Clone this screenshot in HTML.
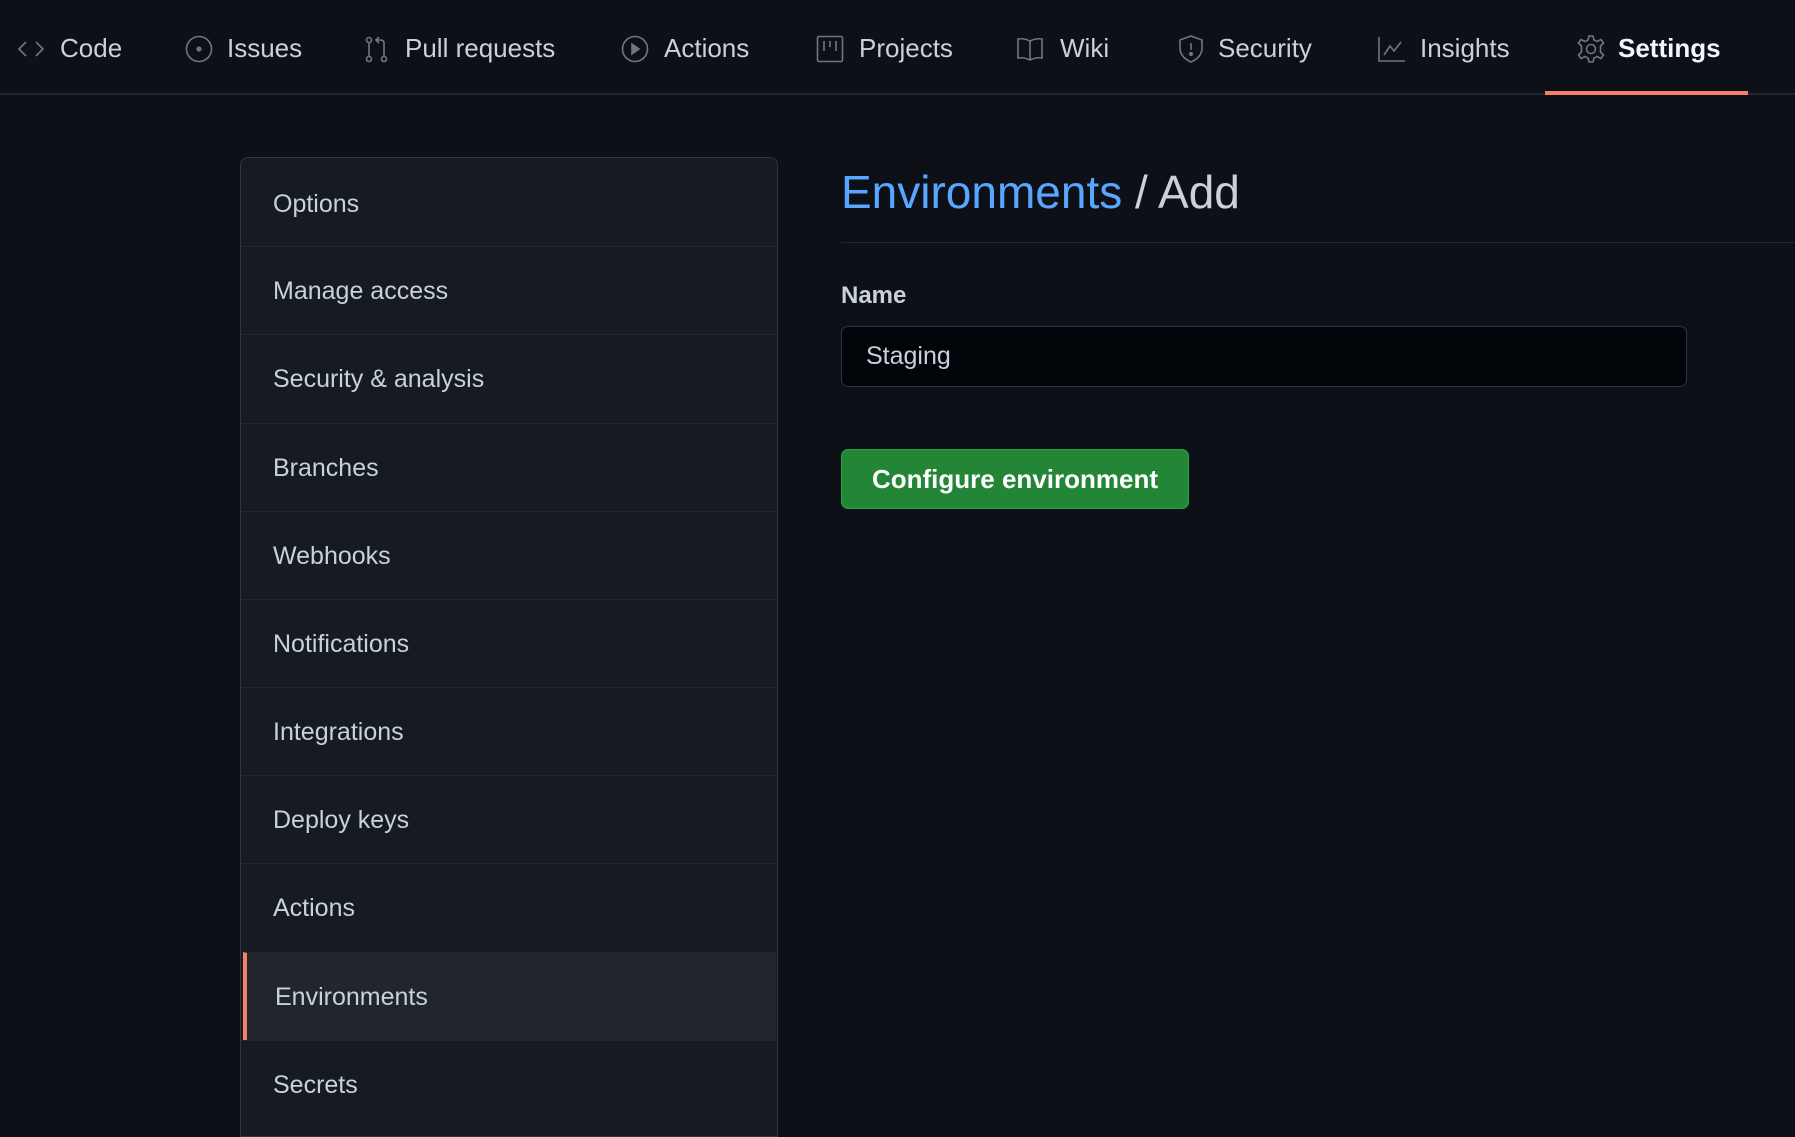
<!DOCTYPE html>
<html><head><meta charset="utf-8"><style>
*{box-sizing:border-box;margin:0;padding:0}
body{width:1795px;height:1116px;background:#0d1117;color:#c9d1d9;font-family:"Liberation Sans",sans-serif;overflow:hidden;position:relative}
.nav{position:absolute;left:0;top:0;width:1795px;height:95px;border-bottom:2px solid #21262d}
.ni{position:absolute;top:30px;height:36px;font-size:26px;line-height:36px;color:#c9d1d9;white-space:nowrap}
.ni svg{position:absolute;top:4px;width:30px;height:30px;fill:none;stroke:#6e7681;stroke-width:1.6}
.ul{position:absolute;left:1545px;top:91px;width:203px;height:4px;background:#f78166}
.side{position:absolute;left:240px;top:157px;width:538px;height:980px;background:#161b22;border:1px solid #30363d;border-radius:8px 8px 0 0}
.it{position:absolute;left:0;width:536px;height:88px;border-top:1px solid #21262d;font-size:25px;line-height:88px;padding-left:32px;color:#c9d1d9}
.it.f{border-top:none}
.it.a{background:#21262d;border-left:4px solid #f78166;padding-left:28px;left:2px;width:533px}
h1{position:absolute;left:841px;top:162px;font-weight:normal;font-size:46px;line-height:60px;color:#c9d1d9;white-space:nowrap}
h1 span{color:#58a6ff}
.hr{position:absolute;left:841px;top:242px;width:954px;height:1px;background:#21262d}
.lbl{position:absolute;left:841px;top:280px;font-size:24px;font-weight:bold;line-height:32px}
.inp{position:absolute;left:841px;top:326px;width:846px;height:61px;background:#010409;border:1px solid #30363d;border-radius:7px;font-size:25px;line-height:59px;padding-left:24px}
.btn{position:absolute;left:841px;top:449px;width:348px;height:60px;background:#238636;border:1px solid #2ea043;border-radius:7px;color:#fff;font-weight:bold;font-size:26px;line-height:58px;text-align:center}
</style></head><body>
<div class="nav">
<div class="ni" style="left:16px"><svg style="left:0" viewBox="0 0 30 30"><path d="M10 8 L3 15 L10 22 M20 8 L27 15 L20 22"/></svg><span style="position:absolute;left:44px">Code</span></div>
<div class="ni" style="left:184px"><svg style="left:0" viewBox="0 0 30 30"><circle cx="15" cy="15" r="12.5"/><circle cx="15" cy="15" r="1.8" fill="#6e7681"/></svg><span style="position:absolute;left:43px">Issues</span></div>
<div class="ni" style="left:362px"><svg style="left:0" viewBox="0 0 30 30"><circle cx="7" cy="6" r="2.5"/><circle cx="7" cy="25" r="2.5"/><circle cx="22" cy="25" r="2.5"/><path d="M7 8.5 V22.5 M22 22.5 V9 Q22 6 18 6 H14 M17 3 L14 6 L17 9"/></svg><span style="position:absolute;left:43px">Pull requests</span></div>
<div class="ni" style="left:620px"><svg style="left:0" viewBox="0 0 30 30"><circle cx="15" cy="15" r="12.5"/><path d="M12 10 L19 15 L12 20 Z" fill="#6e7681"/></svg><span style="position:absolute;left:44px">Actions</span></div>
<div class="ni" style="left:815px"><svg style="left:0" viewBox="0 0 30 30"><rect x="2.5" y="2.5" width="25" height="25" rx="1.5"/><path d="M9 7 V17 M15 7 V13 M21 7 V17"/></svg><span style="position:absolute;left:44px">Projects</span></div>
<div class="ni" style="left:1015px"><svg style="left:0" viewBox="0 0 30 30"><path d="M15 7 Q9 4 3 5 V24 Q9 23 15 26 Q21 23 27 24 V5 Q21 4 15 7 Z M15 7 V26"/></svg><span style="position:absolute;left:45px">Wiki</span></div>
<div class="ni" style="left:1176px"><svg style="left:0" viewBox="0 0 30 30"><path d="M15 2 L26 6 V14 Q26 23 15 28 Q4 23 4 14 V6 Z M15 9 V16"/><circle cx="15" cy="20" r="1.3" fill="#6e7681"/></svg><span style="position:absolute;left:42px">Security</span></div>
<div class="ni" style="left:1376px"><svg style="left:0" viewBox="0 0 30 30"><path d="M3 3 V27 H29 M8 21 L14 12 L18 17 L25 8"/></svg><span style="position:absolute;left:44px">Insights</span></div>
<div class="ni" style="left:1576px;font-weight:bold;color:#f0f6fc"><svg style="left:0" viewBox="0 0 30 30"><circle cx="15" cy="15" r="4.5"/><path d="M13 2 H17 L18 6 L21 7.5 L25 5.5 L27.5 9 L24.5 12 V18 L27.5 21 L25 24.5 L21 22.5 L18 24 L17 28 H13 L12 24 L9 22.5 L5 24.5 L2.5 21 L5.5 18 V12 L2.5 9 L5 5.5 L9 7.5 L12 6 Z"/></svg><span style="position:absolute;left:42px">Settings</span></div>
<div class="ul"></div>
</div>
<div class="side">
<div class="it f" style="top:2px">Options</div>
<div class="it" style="top:88px">Manage access</div>
<div class="it" style="top:176px">Security &amp; analysis</div>
<div class="it" style="top:265px">Branches</div>
<div class="it" style="top:353px">Webhooks</div>
<div class="it" style="top:441px">Notifications</div>
<div class="it" style="top:529px">Integrations</div>
<div class="it" style="top:617px">Deploy keys</div>
<div class="it" style="top:705px">Actions</div>
<div class="it a" style="top:794px">Environments</div>
<div class="it" style="top:882px">Secrets</div>
</div>
<h1><span>Environments</span> / Add</h1>
<div class="hr"></div>
<div class="lbl">Name</div>
<div class="inp">Staging</div>
<div class="btn">Configure environment</div>
</body></html>
